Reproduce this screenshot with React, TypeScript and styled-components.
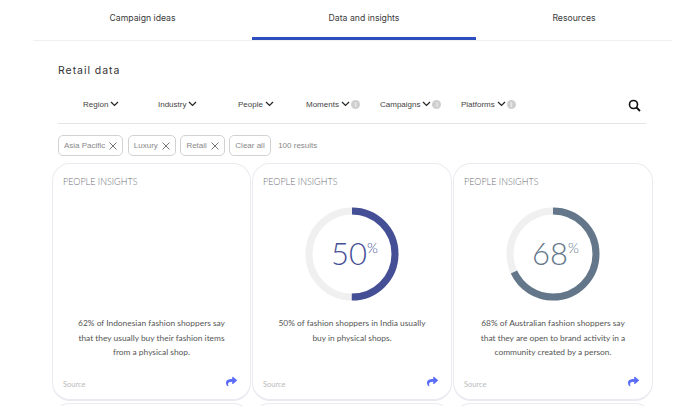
import React from "react";
import styled, { createGlobalStyle } from "styled-components";
import { FaShare } from "react-icons/fa";

const filters = [
  { label: "Region", width: 75 },
  { label: "Industry", width: 80 },
  { label: "People", width: 68 },
  { label: "Moments", width: 74, info: true },
  { label: "Campaigns", width: 81, info: true },
  { label: "Platforms", width: 90, info: true },
];

const chips = ["Asia Pacific", "Luxury", "Retail"];

const insights = [
  {
    text: "62% of Indonesian fashion shoppers say that they usually buy their fashion items from a physical shop.",
  },
  {
    value: 50,
    color: "#454f96",
    text: "50% of fashion shoppers in India usually buy in physical shops.",
  },
  {
    value: 68,
    color: "#64778a",
    text: "68% of Australian fashion shoppers say that they are open to brand activity in a community created by a person.",
  },
];

const Chevron = () => (
  <svg width="9" height="6" viewBox="0 0 9 6" fill="none">
    <path d="M1 1l3.5 3.5L8 1" stroke="#222" strokeWidth="1.2" />
  </svg>
);

const Close = () => (
  <svg width="8" height="8" viewBox="0 0 8 8" fill="none">
    <path d="M.5.5l7 7M7.5.5l-7 7" stroke="#777" strokeWidth="1" />
  </svg>
);

const Ring = ({ value, color }: { value: number; color: string }) => {
  const r = 43;
  const c = 2 * Math.PI * r;
  return (
    <RingBox>
      <svg width="94" height="94" viewBox="0 0 94 94">
        <circle cx="47" cy="47" r={r} fill="none" stroke="#f0f0f0" strokeWidth="7" />
        <circle
          cx="47"
          cy="47"
          r={r}
          fill="none"
          stroke={color}
          strokeWidth="7"
          strokeDasharray={`${(c * value) / 100} ${c}`}
          transform="rotate(-90 47 47)"
        />
      </svg>
      <RingLabel $color={color}>
        {value}
        <sup>%</sup>
      </RingLabel>
    </RingBox>
  );
};

export default function App() {
  return (
    <Page>
      <GlobalStyle />
      <Tabs>
        <Tab $width={219}>Campaign ideas</Tab>
        <Tab $width={224} $active>
          Data and insights
        </Tab>
        <Tab $width={196}>Resources</Tab>
      </Tabs>
      <Title>Retail data</Title>
      <FilterBar>
        {filters.map((f) => (
          <Filter key={f.label} $width={f.width}>
            {f.label}
            <Chevron />
            {f.info && <InfoDot>i</InfoDot>}
          </Filter>
        ))}
        <SearchIcon width="13" height="13" viewBox="0 0 13 13" fill="none">
          <circle cx="5.5" cy="5.5" r="4" stroke="#111" strokeWidth="1.6" />
          <path d="M8.5 8.5L12 12" stroke="#111" strokeWidth="1.8" />
        </SearchIcon>
      </FilterBar>
      <ChipRow>
        {chips.map((c) => (
          <Chip key={c}>
            {c}
            <Close />
          </Chip>
        ))}
        <Chip>Clear all</Chip>
        <Results>100 results</Results>
      </ChipRow>
      <CardGrid>
        {insights.map((item) => (
          <Card key={item.text}>
            <CardLabel>PEOPLE INSIGHTS</CardLabel>
            <RingSlot>
              {item.value !== undefined && <Ring value={item.value} color={item.color} />}
            </RingSlot>
            <Caption>{item.text}</Caption>
            <CardFooter>
              <Source>Source</Source>
              <FaShare size={11} color="#5b6df8" />
            </CardFooter>
          </Card>
        ))}
        <Card />
        <Card />
        <Card />
      </CardGrid>
    </Page>
  );
}

const GlobalStyle = createGlobalStyle`
  html, body {
    margin: 0;
    height: 406px;
    overflow: hidden;
    background: #fff;
    font-family: "Lato", "Liberation Sans", sans-serif;
  }
`;

const Page = styled.div`
  width: 700px;
  height: 406px;
  overflow: hidden;
`;

const Tabs = styled.div`
  display: flex;
  margin: 0 28px 0 33px;
  height: 41px;
  border-bottom: 1px solid #eff0f2;
  box-sizing: border-box;
`;

const Tab = styled.div<{ $width: number; $active?: boolean }>`
  width: ${(p) => p.$width}px;
  height: 40px;
  box-sizing: border-box;
  padding-top: 12px;
  text-align: center;
  font-family: "Inter", sans-serif;
  font-size: 8.7px;
  line-height: 12px;
  color: #3a3a3a;
  border-bottom: 3px solid ${(p) => (p.$active ? "#2f4ebd" : "transparent")};
`;

const Title = styled.h2`
  margin: 23px 0 0 58px;
  font-family: "Inter", sans-serif;
  font-size: 10.5px;
  line-height: 14px;
  font-weight: 400;
  letter-spacing: 0.95px;
  color: #333;
`;

const FilterBar = styled.div`
  display: flex;
  align-items: center;
  margin: 17px 54px 0 58px;
  padding: 0 0 10px 25px;
  height: 29px;
  box-sizing: border-box;
  border-bottom: 1px solid #e3e3e3;
`;

const Filter = styled.div<{ $width: number }>`
  width: ${(p) => p.$width}px;
  flex: none;
  display: flex;
  align-items: center;
  gap: 2px;
  font-family: "Liberation Sans", sans-serif;
  font-size: 8px;
  color: #444;
`;

const InfoDot = styled.span`
  width: 9px;
  height: 9px;
  margin-left: -1px;
  border-radius: 50%;
  background: #cfcfcf;
  color: #fff;
  font-size: 7px;
  line-height: 9px;
  text-align: center;
`;

const SearchIcon = styled.svg`
  margin-left: auto;
  margin-right: 5px;
  margin-top: 3px;
`;

const ChipRow = styled.div`
  display: flex;
  align-items: center;
  gap: 4.5px;
  margin: 11px 0 0 58px;
`;

const Chip = styled.div`
  height: 21px;
  box-sizing: border-box;
  padding: 0 5px;
  display: flex;
  align-items: center;
  gap: 4px;
  border: 1px solid #d2d2d2;
  border-radius: 5px;
  font-family: "Liberation Sans", sans-serif;
  font-size: 8px;
  color: #888;
`;

const Results = styled.span`
  margin-left: 3px;
  font-family: "Liberation Sans", sans-serif;
  font-size: 8px;
  color: #888;
`;

const CardGrid = styled.div`
  display: grid;
  grid-template-columns: 199px 200px 200px;
  grid-auto-rows: 238px;
  gap: 2px 1px;
  margin: 7px 0 0 52px;
`;

const Card = styled.div`
  display: flex;
  flex-direction: column;
  box-sizing: border-box;
  height: 238px;
  padding: 12px 10px 10px;
  border: 1px solid #eaebf0;
  border-bottom-width: 2px;
  border-radius: 18px;
`;

const CardLabel = styled.div`
  font-size: 9px;
  line-height: 12px;
  font-weight: 300;
  color: #6f6f78;
`;

const RingSlot = styled.div`
  height: 94px;
  margin-top: 19px;
  display: flex;
  justify-content: center;
`;

const RingBox = styled.div`
  position: relative;
  width: 94px;
  height: 94px;
  svg {
    display: block;
  }
`;

const RingLabel = styled.div<{ $color: string }>`
  position: absolute;
  inset: 0;
  display: flex;
  align-items: center;
  justify-content: center;
  padding: 0 0 2px 5px;
  font-size: 31px;
  font-weight: 300;
  color: ${(p) => p.$color};
  sup {
    font-size: 14px;
    margin-top: -10px;
    line-height: 1;
    align-self: center;
  }
`;

const Caption = styled.p`
  margin: 15px 0 0;
  padding: 0 13px;
  height: 44px;
  font-size: 8.4px;
  line-height: 14.5px;
  text-align: center;
  color: #555;
`;

const CardFooter = styled.div`
  margin-top: auto;
  display: flex;
  align-items: flex-start;
  justify-content: space-between;
  padding-right: 3px;
`;

const Source = styled.span`
  margin-top: 4px;
  font-size: 7.5px;
  color: #bbb;
`;
